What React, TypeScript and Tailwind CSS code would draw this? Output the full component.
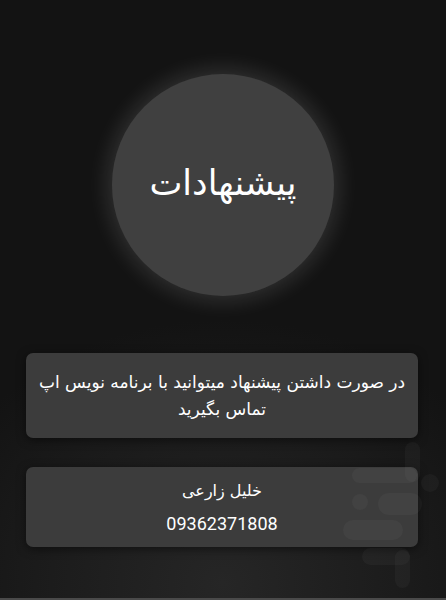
export default function App() {
  return (
    <div
      dir="rtl"
      className="relative w-[446px] h-[600px] overflow-hidden bg-[#131313] flex flex-col"
      style={{ fontFamily: '"DejaVu Sans", sans-serif' }}
    >
      <div className="absolute inset-x-0 bottom-0 h-[330px] bg-[radial-gradient(ellipse_70%_80%_at_50%_95%,#262626_0%,#1c1c1c_55%,#131313_100%)]" />
      <div className="relative flex justify-center pt-[74px]">
        <div className="w-[222px] h-[222px] rounded-full bg-[#404040] shadow-[0_0_22px_4px_rgba(255,255,255,0.14)] flex items-center justify-center">
          <span className="text-white text-[35px] leading-none pb-[4px]">پیشنهادات</span>
        </div>
      </div>
      <div className="relative mt-[57px] ml-[26px] mr-[28px] h-[85px] rounded-[7px] bg-[#3c3c3c] shadow-[0_2px_10px_rgba(0,0,0,0.5)] flex flex-col items-center justify-center text-white text-[17px] leading-[27px] text-center">
        <div>در صورت داشتن پیشنهاد میتوانید با برنامه نویس اپ</div>
        <div>تماس بگیرید</div>
      </div>
      <div className="relative mt-[29px] ml-[26px] mr-[28px] h-[80px] rounded-[7px] bg-[#3c3c3c] shadow-[0_2px_10px_rgba(0,0,0,0.5)] flex flex-col items-center justify-center text-white text-center">
        <div className="text-[16px] leading-[22px]">خلیل زارعی</div>
        <div className="mt-[11px] text-[18px] leading-[22px]" style={{ fontFamily: 'Roboto, sans-serif' }}>09362371808</div>
      </div>
      <svg className="absolute left-0 top-0 pointer-events-none" width="446" height="600" viewBox="0 0 446 600">
        <g fill="#ffffff" fillOpacity="0.03">
          <rect x="405" y="442" width="15" height="40" rx="7.5" />
          <circle cx="430" cy="483" r="9" />
          <rect x="352" y="468" width="65" height="15" rx="7.5" />
          <circle cx="360" cy="502" r="8" />
          <rect x="378" y="493" width="44" height="22" rx="11" />
          <rect x="343" y="520" width="60" height="20" rx="10" />
          <rect x="362" y="548" width="48" height="17" rx="8.5" />
          <rect x="395" y="550" width="15" height="38" rx="7.5" />
        </g>
      </svg>
      <div className="absolute inset-x-0 bottom-0 h-[2px] bg-[#4a4a4a]" />
    </div>
  );
}
